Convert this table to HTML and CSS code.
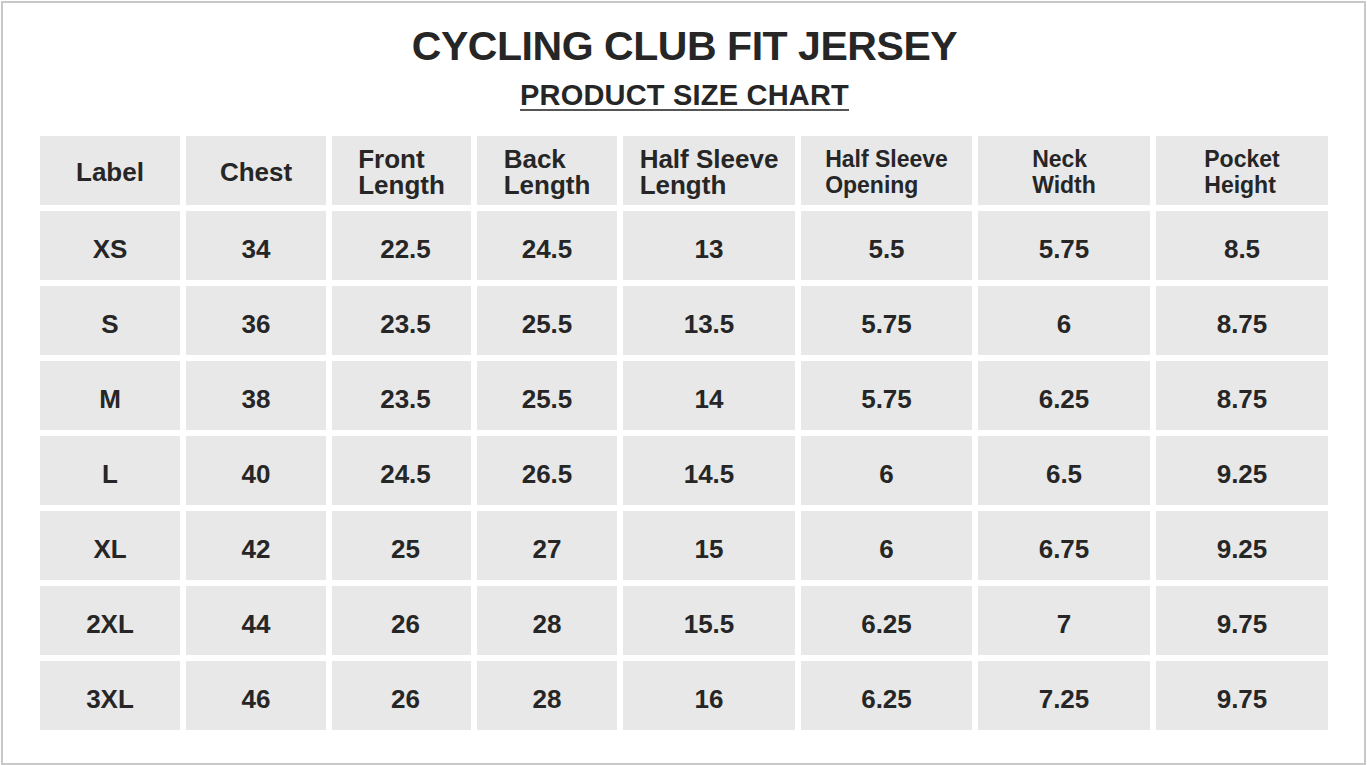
FILE: index.html
```html
<!DOCTYPE html>
<html>
<head>
<meta charset="utf-8">
<link rel="stylesheet" href="styles.css">
</head>
<body>
<div class="frame">
  <h1 class="title">CYCLING CLUB FIT JERSEY</h1>
  <h2 class="subtitle"><span>PRODUCT SIZE CHART</span></h2>
  <div class="chart">
    <div class="cell head"><span>Label</span></div>
    <div class="cell head"><span>Chest</span></div>
    <div class="cell head"><span>Front<br>Length</span></div>
    <div class="cell head"><span>Back<br>Length</span></div>
    <div class="cell head"><span>Half Sleeve<br>Length</span></div>
    <div class="cell head small"><span>Half Sleeve<br>Opening</span></div>
    <div class="cell head small"><span>Neck<br>Width</span></div>
    <div class="cell head small"><span>Pocket<br>Height</span></div>

    <div class="cell">XS</div><div class="cell">34</div><div class="cell shift">22.5</div><div class="cell">24.5</div><div class="cell">13</div><div class="cell">5.5</div><div class="cell">5.75</div><div class="cell">8.5</div>
    <div class="cell">S</div><div class="cell">36</div><div class="cell shift">23.5</div><div class="cell">25.5</div><div class="cell">13.5</div><div class="cell">5.75</div><div class="cell">6</div><div class="cell">8.75</div>
    <div class="cell">M</div><div class="cell">38</div><div class="cell shift">23.5</div><div class="cell">25.5</div><div class="cell">14</div><div class="cell">5.75</div><div class="cell">6.25</div><div class="cell">8.75</div>
    <div class="cell">L</div><div class="cell">40</div><div class="cell shift">24.5</div><div class="cell">26.5</div><div class="cell">14.5</div><div class="cell">6</div><div class="cell">6.5</div><div class="cell">9.25</div>
    <div class="cell">XL</div><div class="cell">42</div><div class="cell shift">25</div><div class="cell">27</div><div class="cell">15</div><div class="cell">6</div><div class="cell">6.75</div><div class="cell">9.25</div>
    <div class="cell">2XL</div><div class="cell">44</div><div class="cell shift">26</div><div class="cell">28</div><div class="cell">15.5</div><div class="cell">6.25</div><div class="cell">7</div><div class="cell">9.75</div>
    <div class="cell">3XL</div><div class="cell">46</div><div class="cell shift">26</div><div class="cell">28</div><div class="cell">16</div><div class="cell">6.25</div><div class="cell">7.25</div><div class="cell">9.75</div>
  </div>
</div>
</body>
</html>
```
FILE: styles.css
```css
html, body {
  margin: 0;
  padding: 0;
  background: #ffffff;
}
body {
  font-family: "Liberation Sans", Arial, sans-serif;
  color: #262626;
}
.frame {
  box-sizing: border-box;
  margin: 1px;
  width: 1365px;
  height: 764px;
  border: 2px solid #c8c8c8;
  padding: 19px 35px 0 37px;
  background: #fff;
}
.title {
  margin: 0;
  font-size: 41px;
  line-height: 48px;
  font-weight: bold;
  text-align: center;
  letter-spacing: -0.45px;
  color: #262626;
}
.subtitle {
  margin: 9px 0 0 0;
  font-size: 29px;
  line-height: 32px;
  font-weight: bold;
  text-align: center;
  letter-spacing: 0.2px;
  color: #262626;
}
.subtitle span {
  text-decoration: underline;
  text-decoration-thickness: 2px;
  text-underline-offset: 4px;
  text-decoration-color: #555;
}
.chart {
  margin-top: 25px;
  display: grid;
  grid-template-columns: 140px 140px 139px 140px 172px 171px 172px 172px;
  grid-auto-rows: 69px;
  gap: 6px;
}
.cell {
  background: #e8e8e8;
  display: flex;
  align-items: center;
  justify-content: center;
  font-size: 26px;
  font-weight: bold;
  padding-top: 8px;
  box-sizing: border-box;
}
.cell.shift {
  padding-left: 8px;
}
.head {
  padding-top: 3px;
  line-height: 26px;
}
.head span {
  display: inline-block;
  text-align: left;
}
.head.small {
  font-size: 23px;
}
```
